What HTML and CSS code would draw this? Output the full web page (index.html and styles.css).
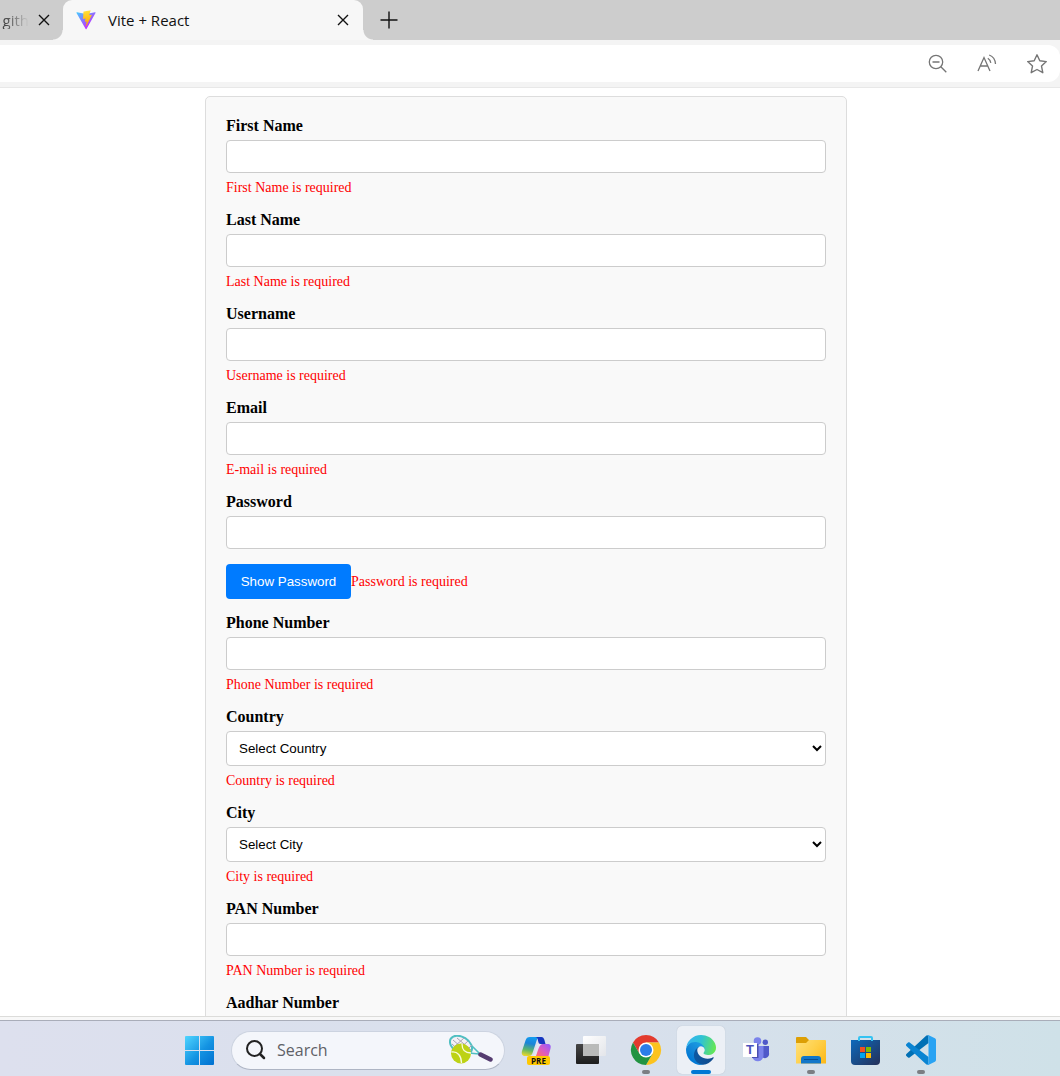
FILE: index.html
```html
<!DOCTYPE html>
<html lang="en">
<head>
<meta charset="utf-8">
<title>Vite + React</title>
<link rel="stylesheet" href="styles.css">
</head>
<body>
<header class="tabs">
  <div class="tab tab-previous">
    <span class="tab-title tab-title-cut">n gith</span>
    <button class="icon-button" type="button" aria-label="Close tab"><svg width="12" height="12" viewBox="0 0 12 12"><path d="M1 1l10 10M11 1L1 11" stroke="#111" stroke-width="1.4"/></svg></button>
  </div>
  <div class="tab tab-active">
    <svg width="20" height="20" viewBox="0 0 410 404">
      <defs>
        <linearGradient id="vite-a" x1="6" y1="33" x2="235" y2="344" gradientUnits="userSpaceOnUse"><stop stop-color="#41d1ff"/><stop offset="1" stop-color="#bd34fe"/></linearGradient>
        <linearGradient id="vite-b" x1="194.651" y1="8.818" x2="236.076" y2="292.989" gradientUnits="userSpaceOnUse"><stop stop-color="#ffea83"/><stop offset=".083" stop-color="#ffdd35"/><stop offset="1" stop-color="#ffa800"/></linearGradient>
      </defs>
      <path fill="url(#vite-a)" d="M399.641 59.5246L215.643 388.545C211.844 395.338 202.084 395.378 198.228 388.618L10.5817 59.5563C6.38087 52.1896 12.6802 43.2665 21.0281 44.7586L205.223 77.6824C206.398 77.8924 207.601 77.8904 208.776 77.6763L389.119 44.8058C397.439 43.2894 403.768 52.1434 399.641 59.5246Z"/>
      <path fill="url(#vite-b)" d="M292.965 1.5744L156.801 28.2552C154.563 28.6937 152.906 30.5903 152.771 32.8664L144.395 174.33C144.198 177.662 147.258 180.248 150.51 179.498L188.42 170.749C191.967 169.931 195.172 173.055 194.443 176.622L183.18 231.775C182.422 235.487 185.907 238.661 189.532 237.56L212.947 230.446C216.577 229.344 220.065 232.527 219.297 236.242L201.398 322.875C200.278 328.294 207.486 331.249 210.492 326.603L212.5 323.5L323.454 102.072C325.312 98.3645 322.108 94.137 318.036 94.9228L279.014 102.454C275.347 103.161 272.227 99.746 273.262 96.1583L298.731 7.86689C299.767 4.27314 296.636 0.855181 292.965 1.5744Z"/>
    </svg>
    <span class="tab-title">Vite + React</span>
    <button class="icon-button" type="button" aria-label="Close tab"><svg width="12" height="12" viewBox="0 0 12 12"><path d="M1 1l10 10M11 1L1 11" stroke="#111" stroke-width="1.4"/></svg></button>
  </div>
  <button class="icon-button new-tab" type="button" aria-label="New tab"><svg width="18" height="18" viewBox="0 0 18 18"><path d="M9 .5v17M.5 9h17" stroke="#111" stroke-width="1.4"/></svg></button>
</header>

<div class="toolbar">
  <div class="address-bar">
    <button class="icon-button" type="button" aria-label="Zoom out"><svg width="20" height="20" viewBox="0 0 20 20" fill="none" stroke="#757575" stroke-width="1.3"><circle cx="8" cy="8" r="6.7"/><path d="M4.5 8h7M12.8 12.8l5.500 5.500"/></svg></button>
    <button class="icon-button" type="button" aria-label="Read aloud"><svg width="20" height="20" viewBox="0 0 20 20" fill="none" stroke="#757575" stroke-width="1.3"><path d="M1 17L7 3.500L13 17M3.300 12h7.400M10.800 4.200c1.700 1 2.700 2.500 3 4.700M12.200 1c3.800 1.300 6 4.500 6.300 9"/></svg></button>
    <button class="icon-button" type="button" aria-label="Add to favorites"><svg width="22" height="22" viewBox="0 0 22 22" fill="none" stroke="#757575" stroke-width="1.4" stroke-linejoin="round"><path d="M11 1.800l2.800 6 6.500.8-4.800 4.500 1.300 6.600-5.800-3.200-5.800 3.200 1.300-6.600L1.700 8.600l6.500-.8z"/></svg></button>
  </div>
</div>

<main class="viewport">
  <form class="card" novalidate>
    <div class="field"><label for="first">First Name</label><input id="first" type="text"><span class="error">First Name is required</span></div>
    <div class="field"><label for="last">Last Name</label><input id="last" type="text"><span class="error">Last Name is required</span></div>
    <div class="field"><label for="user">Username</label><input id="user" type="text"><span class="error">Username is required</span></div>
    <div class="field"><label for="email">Email</label><input id="email" type="email"><span class="error">E-mail is required</span></div>
    <div class="field">
      <label for="password">Password</label><input id="password" type="password">
      <div class="password-row"><button class="primary" type="button">Show Password</button><span class="error">Password is required</span></div>
    </div>
    <div class="field"><label for="phone">Phone Number</label><input id="phone" type="tel"><span class="error">Phone Number is required</span></div>
    <div class="field"><label for="country">Country</label><select id="country"><option>Select Country</option></select><span class="error">Country is required</span></div>
    <div class="field"><label for="city">City</label><select id="city"><option>Select City</option></select><span class="error">City is required</span></div>
    <div class="field"><label for="pan">PAN Number</label><input id="pan" type="text"><span class="error">PAN Number is required</span></div>
    <div class="field"><label for="aadhar">Aadhar Number</label><input id="aadhar" type="text"></div>
  </form>
</main>

<div class="window-edge"></div>

<footer class="taskbar">
  <button class="app" type="button" aria-label="Start"><svg width="48" height="48" viewBox="0 0 48 48">
    <defs><linearGradient id="win" x1="9" y1="10" x2="38" y2="39" gradientUnits="userSpaceOnUse"><stop stop-color="#4fd5ff"/><stop offset=".55" stop-color="#1493e2"/><stop offset="1" stop-color="#0070d0"/></linearGradient></defs>
    <path fill="url(#win)" d="M10 10h13v14H9V11a1 1 0 0 1 1-1zM24 10h13a1 1 0 0 1 1 1v13H24zM9 25h14v14H10a1 1 0 0 1-1-1zM24 25h14v13a1 1 0 0 1-1 1H24z"/></svg></button>

  <label class="search">
    <svg width="20" height="20" viewBox="0 0 20 20" fill="none" stroke="#222"><circle cx="8.500" cy="8.500" r="7.500" stroke-width="2"/><path d="M14 14l4 4" stroke-width="2.500" stroke-linecap="round"/></svg>
    <input type="search" placeholder="Search" aria-label="Search">
    <svg width="44" height="30" viewBox="0 0 44 30">
      <ellipse cx="12" cy="10" rx="12" ry="8" transform="rotate(32 12 10)" fill="#f3f1f6" stroke="#50bfc2" stroke-width="2"/>
      <path d="M4 5l15 13M8 3l14 12M3 9l10 9M15 3L5 12M19 6L8 16M23 10l-9 9" stroke="#a9a3b4"/>
      <path d="M23 11l7 7M20 18l10 1" stroke="#50bfc2" stroke-width="1.600"/>
      <path d="M31.500 19.500L41.500 24.500" stroke="#553c70" stroke-width="4.500" stroke-linecap="round"/>
      <circle cx="12" cy="18.500" r="10" fill="#bdd215"/>
      <path d="M2.500 17c6-1 10 4 10 11M13 9c0 6 3 9 9 9" fill="none" stroke="#f9fbdc" stroke-width="1.300"/>
    </svg>
  </label>

  <button class="app" type="button" aria-label="Copilot"><svg width="48" height="48" viewBox="0 0 48 48">
    <defs>
      <linearGradient id="cop-a" x1="20" y1="11" x2="16" y2="30" gradientUnits="userSpaceOnUse"><stop stop-color="#129df0"/><stop offset=".35" stop-color="#1b84d8"/><stop offset=".7" stop-color="#5fb768"/><stop offset="1" stop-color="#e5d52c"/></linearGradient>
      <linearGradient id="cop-b" x1="36" y1="18" x2="26" y2="30" gradientUnits="userSpaceOnUse"><stop stop-color="#9c5cf5"/><stop offset=".5" stop-color="#d85bc5"/><stop offset="1" stop-color="#ff6b75"/></linearGradient>
    </defs>
    <path fill="url(#cop-b)" d="M27 18h8.500c3 0 3.700 2 3 4.500L36.500 30H21c2 0 2.700-1 3.300-3z"/>
    <path fill="#e4e6f3" d="M25 18h5c-2 1-3 3-4 6l-2 6h-5c2 0 3-1 3.500-3z"/>
    <path fill="url(#cop-a)" d="M18 11h9c-2 1-2.500 4-3.500 7l-3 9c-.7 2-1.500 3-4 3h-3.500c-3 0-3.700-2.500-3-5l3.500-10.500c.8-2.500 2-3.500 4.500-3.500z"/>
    <path fill="#1637c0" d="M23 11h6.500c2.500 0 3 3 4 7h-5c-1.500 0-2-1-2.400-3-.4-2.500-1-4-3.100-4z"/>
    <rect x="15" y="30" width="23" height="9" rx="2" fill="#ffc800"/>
    <text x="26.500" y="37.500" text-anchor="middle" class="badge-text">PRE</text></svg></button>

  <button class="app" type="button" aria-label="Task view"><svg width="48" height="48" viewBox="0 0 48 48">
    <defs><linearGradient id="tv" x1="16" y1="10" x2="38" y2="30" gradientUnits="userSpaceOnUse"><stop stop-color="#fff"/><stop offset="1" stop-color="#e4e6ea"/></linearGradient><linearGradient id="tvd" x2="0" y2="1"><stop stop-color="#454545"/><stop offset="1" stop-color="#1d1d1d"/></linearGradient></defs>
    <rect x="9" y="18" width="23" height="20" rx="1" fill="url(#tvd)"/><rect x="16" y="10" width="23" height="20" rx="1" fill="url(#tv)"/><path fill="#b9bab9" d="M16 18h16v12H16z"/></svg></button>

  <button class="app" type="button" aria-label="Chrome"><svg width="48" height="48" viewBox="0 0 48 48">
    <path fill="#e33b2e" d="M11 16.500a15 15 0 0 1 26 0H24l-6.500 11.250z"/>
    <path fill="#fcc31e" d="M37 16.500A15 15 0 0 1 24 39l6.500-11.250L24 16.500z"/>
    <path fill="#229342" d="M24 39a15 15 0 0 1-13-22.500l6.500 11.250h13z"/>
    <circle cx="24" cy="24" r="7.500" fill="#fff"/><circle cx="24" cy="24" r="6" fill="#2b7de9"/>
    <rect x="20" y="44" width="8" height="4" rx="2" fill="#7b7e83"/></svg></button>

  <button class="app app-active" type="button" aria-label="Edge"><svg width="48" height="48" viewBox="0 0 48 48">
    <defs>
      <linearGradient id="edge-a" x1="63" y1="177" x2="241" y2="177" gradientUnits="userSpaceOnUse"><stop stop-color="#0c59a4"/><stop offset="1" stop-color="#114a8b"/></linearGradient>
      <linearGradient id="edge-b" x1="157" y1="100" x2="46" y2="221" gradientUnits="userSpaceOnUse"><stop stop-color="#1b9de2"/><stop offset=".5" stop-color="#1488d8"/><stop offset="1" stop-color="#0078d4"/></linearGradient>
      <linearGradient id="edge-c" x1="20" y1="60" x2="255" y2="120" gradientUnits="userSpaceOnUse"><stop stop-color="#35b5ee"/><stop offset=".45" stop-color="#2fc2d4"/><stop offset="1" stop-color="#66e851"/></linearGradient>
    </defs>
    <g transform="translate(9 9) scale(.1172) translate(-4.630 -4.920)">
      <path fill="url(#edge-a)" d="M235.680 195.460a93.730 93.730 0 0 1-10.540 4.710 101.870 101.870 0 0 1-35.900 6.460c-47.320 0-88.540-32.550-88.540-74.320A31.480 31.480 0 0 1 117.130 105c-42.800 1.800-53.800 46.400-53.800 72.530 0 73.880 68.090 81.370 82.760 81.370 7.910 0 19.840-2.300 27-4.560l1.310-.44a128.340 128.340 0 0 0 66.600-52.800 4 4 0 0 0-5.320-5.640Z"/>
      <path fill="url(#edge-b)" d="M110.340 246.340A79.200 79.200 0 0 1 87.600 225a80.720 80.720 0 0 1 29.530-120c3.120-1.470 8.450-4.130 15.540-4a32.350 32.350 0 0 1 25.690 13 31.880 31.880 0 0 1 6.360 18.660c0-.21 24.460-79.600-80-79.600-43.900 0-80 41.660-80 78.210a130.150 130.150 0 0 0 12.110 56 128 128 0 0 0 156.380 67.110 75.550 75.550 0 0 1-62.780-8Z"/>
      <path fill="url(#edge-c)" d="M156.940 153.780c-.81 1.050-3.300 2.500-3.300 5.660 0 2.610 1.700 5.120 4.720 7.230 14.380 10 41.490 8.680 41.560 8.680a59.560 59.560 0 0 0 30.270-8.350 61.380 61.380 0 0 0 30.430-52.880c.26-22.410-8-37.310-11.340-43.910-21.190-41.450-66.930-65.290-116.670-65.290a128 128 0 0 0-128 126.200c.48-36.540 36.800-66.050 80-66.050 3.500 0 23.460.34 42 10.070 16.340 8.580 24.900 18.940 30.850 29.210 6.180 10.670 7.280 24.150 7.280 29.520s-2.740 13.330-7.800 19.910Z"/>
    </g>
    <rect x="14" y="44" width="20" height="4" rx="2" fill="#0078d4"/></svg></button>

  <button class="app" type="button" aria-label="Teams"><svg width="48" height="48" viewBox="0 0 48 48">
    <circle cx="33.300" cy="16.300" r="2.700" fill="#5059c9"/><circle cx="25.500" cy="15" r="3.800" fill="#7b83eb"/>
    <path fill="#5059c9" d="M29 20h8v7a4 4 0 0 1-8 2z"/><path fill="#7b83eb" d="M20 20h11.500v9a5.700 5.700 0 0 1-11.500 1z"/>
    <path fill="#4a50b0" d="M24 18h2.500v14H20v-2h4z"/>
    <path fill="#fff" d="M11 17h14v14H11z"/><text x="18" y="28" text-anchor="middle" class="teams-text">T</text></svg></button>

  <button class="app" type="button" aria-label="File Explorer"><svg width="48" height="48" viewBox="0 0 48 48">
    <defs><linearGradient id="fold" x1="9" y1="14" x2="39" y2="38" gradientUnits="userSpaceOnUse"><stop stop-color="#ffe07a"/><stop offset=".5" stop-color="#ffd04a"/><stop offset="1" stop-color="#fdb714"/></linearGradient></defs>
    <path fill="#dd9f05" d="M10 11h9l3 3h16v6H9v-8a1 1 0 0 1 1-1z"/><path fill="url(#fold)" d="M9 17h10l3-3h16a1 1 0 0 1 1 1v22.500H9z"/>
    <path fill="#1277c9" d="M17 30h14a3 3 0 0 1 3 3v4.500H14V33a3 3 0 0 1 3-3z"/><path d="M17 33.500h14" stroke="#0b4f92"/>
    <rect x="20" y="44" width="8" height="4" rx="2" fill="#7b7e83"/></svg></button>

  <button class="app" type="button" aria-label="Microsoft Store"><svg width="48" height="48" viewBox="0 0 48 48">
    <defs><linearGradient id="store" x1="12" y1="14" x2="34" y2="39" gradientUnits="userSpaceOnUse"><stop stop-color="#0f67b7"/><stop offset="1" stop-color="#23345f"/></linearGradient></defs>
    <path fill="url(#store)" d="M9 14h29v21a4 4 0 0 1-4 4H13a4 4 0 0 1-4-4z"/><path d="M17 15v-3a1 1 0 0 1 1-1h11a1 1 0 0 1 1 1v3" fill="none" stroke="#35c3f2" stroke-width="2"/>
    <path fill="#f25022" d="M18 21h5v5h-5z"/><path fill="#7fba00" d="M24 21h5v5h-5z"/><path fill="#00a4ef" d="M18 27h5v5h-5z"/><path fill="#ffb900" d="M24 27h5v5h-5z"/></svg></button>

  <button class="app" type="button" aria-label="Visual Studio Code"><svg width="48" height="48" viewBox="0 0 48 48">
    <g transform="translate(9 9) scale(.3)">
      <path fill="#0070b5" d="M75 1L68 2 1.300 63.580c-1.810 1.650-1.810 4.510 0 6.160l5.510 5.010c1.490 1.350 3.720 1.450 5.320.24L75 27z"/>
      <path fill="#0a84d2" d="M75 99L68 98 1.300 36.420c-1.810-1.650-1.810-4.510 0-6.160l5.510-5.010c1.490-1.350 3.720-1.450 5.320-.24L75 73z"/>
      <path fill="#29a3f3" d="M75.860 99.130c-2.390 1.150-5.240.66-7.110-1.210 2.310 2.310 6.250.67 6.250-2.590V4.670c0-3.260-3.940-4.900-6.250-2.590 1.870-1.870 4.720-2.350 7.110-1.200l20.600 9.900c2.160 1.040 3.540 3.230 3.540 5.630v67.180c0 2.400-1.380 4.590-3.540 5.630l-20.600 9.910Z"/>
    </g>
    <rect x="20" y="44" width="8" height="4" rx="2" fill="#7b7e83"/></svg></button>
</footer>
</body>
</html>
```
FILE: styles.css
```css
* { box-sizing: border-box; }

body {
  margin: 0;
  height: 100vh;
  display: flex;
  flex-direction: column;
  overflow: hidden;
  background: #fff;
  font-family: "Liberation Serif", "Times New Roman", serif;
}

button { font-family: "Liberation Sans", Arial, sans-serif; }
svg { display: block; flex: none; }

.icon-button {
  border: 0;
  padding: 0;
  background: none;
}

/* Browser tab strip */
.tabs {
  flex: none;
  display: flex;
  height: 40px;
  background: #cdcdcd;
  font-family: "Open Sans", "Noto Sans", sans-serif;
  font-size: 15px;
  line-height: 18px;
  color: #111;
}

.tab {
  display: flex;
  align-items: center;
}

.tab-previous {
  width: 63px;
  padding-right: 13px;
  justify-content: flex-end;
  gap: 9px;
}

.tab-title-cut {
  color: transparent;
  background: linear-gradient(90deg, #444 40%, #cdcdcd);
  background-clip: text;
  white-space: nowrap;
}

.tab-active {
  position: relative;
  width: 300px;
  padding: 0 14px 0 13px;
  gap: 12px;
  background: #f7f7f7;
  border-radius: 9px 9px 0 0;
}

.tab-active .tab-title { flex: 1; }

.tab-active::before,
.tab-active::after {
  content: "";
  position: absolute;
  bottom: 0;
  width: 10px;
  height: 10px;
}

.tab-active::before {
  right: 100%;
  background: radial-gradient(circle at 0 0, transparent 9px, #f7f7f7 10px);
}

.tab-active::after {
  left: 100%;
  background: radial-gradient(circle at 100% 0, transparent 9px, #f7f7f7 10px);
}

.new-tab { margin-left: 17px; }

/* Address bar */
.toolbar {
  flex: none;
  padding: 5px 0;
  background: #f4f4f4;
  border-bottom: 1px solid #e8e8e8;
}

.address-bar {
  display: flex;
  align-items: center;
  justify-content: flex-end;
  gap: 29px;
  height: 37px;
  padding-right: 12px;
  background: #fff;
  border-radius: 0 12px 12px 0;
}

/* Page content */
.viewport {
  flex: 1;
  min-height: 0;
  overflow: hidden;
  padding: 8px 8px 0 0;
}

.card {
  max-width: 642px;
  margin: 0 auto;
  padding: 20px;
  background: #f9f9f9;
  border: 1px solid #ddd;
  border-radius: 5px;
}

.field {
  display: flex;
  flex-direction: column;
  margin-bottom: 15px;
}

.field label {
  margin-bottom: 5px;
  font-size: 16px;
  line-height: 18px;
  font-weight: bold;
}

.field input,
.field select {
  width: 100%;
  height: 33px;
  padding: 8px;
  border: 1px solid #ccc;
  border-radius: 4px;
  background: #fff;
  color: #000;
  font-family: "Liberation Sans", Arial, sans-serif;
}

.field select { height: 35px; }

.error {
  margin-top: 7px;
  font-size: 14px;
  line-height: 16px;
  color: #f00;
}

.password-row {
  display: flex;
  align-items: center;
  margin-top: 15px;
}

.password-row .error { margin-top: 0; }

.primary {
  height: 35px;
  width: 125px;
  padding: 0;
  border: 0;
  border-radius: 4px;
  background: #007bff;
  color: #fff;
}

.window-edge {
  flex: none;
  height: 4px;
  background: #f8f8f8;
  border-top: 1px solid #dcdcda;
}

/* Desktop taskbar */
.taskbar {
  flex: none;
  display: flex;
  align-items: center;
  gap: 7px;
  height: 56px;
  padding: 3px 0 0 176px;
  overflow: hidden;
  background: linear-gradient(90deg, #dde0ee, #d8e0ec 60%, #cfe1e8);
  border-top: 1px solid #a9adb9;
}

.app {
  flex: none;
  width: 48px;
  height: 48px;
  padding: 0;
  border: 0;
  border-radius: 5px;
  background: none;
}

.app-active {
  background: #ecf0f6;
  box-shadow: 0 0 1px #aab2c0;
}

.search {
  flex: none;
  display: flex;
  align-items: center;
  gap: 11px;
  width: 274px;
  height: 39px;
  padding: 0 11px 0 14px;
  border: 1px solid #ccd3e0;
  border-bottom-color: #aeb5c4;
  border-radius: 20px;
  background: #f4f6fb;
}

.search input {
  flex: 1;
  min-width: 0;
  padding: 0;
  border: 0;
  background: none;
  font-family: "Open Sans", "Noto Sans", sans-serif;
  font-size: 16px;
}

.search input::placeholder { color: #5f6167; }

.badge-text {
  font: bold 8px "Open Sans", sans-serif;
  fill: #111;
}

.teams-text {
  font: bold 13px "Liberation Sans", sans-serif;
  fill: #4b53bc;
}
```
